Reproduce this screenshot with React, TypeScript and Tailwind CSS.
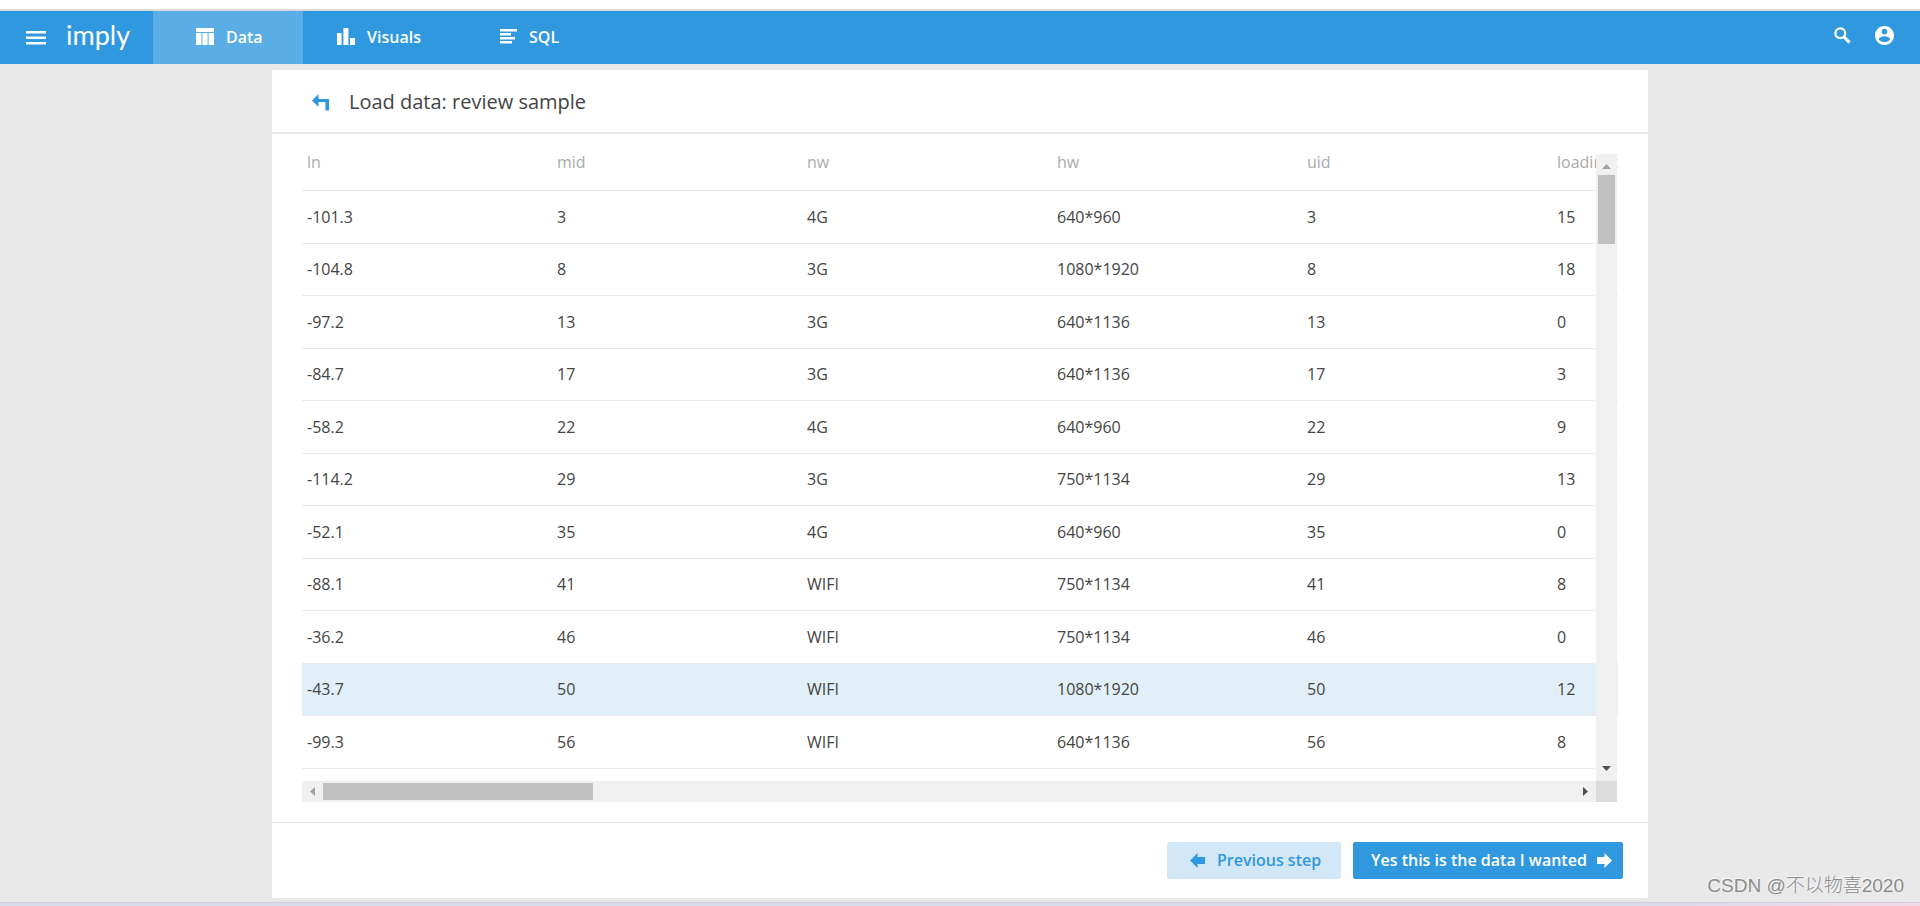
import React from 'react';

const columns = ['ln', 'mid', 'nw', 'hw', 'uid', 'loadingtime'];

const rows = [
  ['-101.3', '3', '4G', '640*960', '3', '15'],
  ['-104.8', '8', '3G', '1080*1920', '8', '18'],
  ['-97.2', '13', '3G', '640*1136', '13', '0'],
  ['-84.7', '17', '3G', '640*1136', '17', '3'],
  ['-58.2', '22', '4G', '640*960', '22', '9'],
  ['-114.2', '29', '3G', '750*1134', '29', '13'],
  ['-52.1', '35', '4G', '640*960', '35', '0'],
  ['-88.1', '41', 'WIFI', '750*1134', '41', '8'],
  ['-36.2', '46', 'WIFI', '750*1134', '46', '0'],
  ['-43.7', '50', 'WIFI', '1080*1920', '50', '12'],
  ['-99.3', '56', 'WIFI', '640*1136', '56', '8'],
];

const TopBar = () => (
  <header className="flex h-[53px] items-stretch bg-[#3098df] text-white">
    <div className="flex w-[153px] items-center gap-5 pl-[26px]">
      <button type="button" aria-label="Menu">
        <svg width="20" height="14" viewBox="0 0 20 14" fill="currentColor">
          <path d="M0 0h20v2.6H0zM0 5.5h20v2.6H0zM0 11h20v2.6H0z" />
        </svg>
      </button>
      <a href="#home" className="pb-1.5 font-['Lato'] text-[27px] leading-8">imply</a>
    </div>
    <nav className="flex font-semibold">
      <a href="#data" className="flex w-[150px] items-center gap-3 bg-[#5aade5] pb-0.5 pl-[43px]">
        <svg width="18" height="17" viewBox="0 0 18 17" fill="currentColor">
          <path d="M0 0h18v4H0zM0 5h5.4v12H0zM6.4 5h5.2v12H6.4zM12.6 5H18v12h-5.4z" />
        </svg>
        Data
      </a>
      <a href="#visuals" className="flex w-[154px] items-center gap-3 pb-0.5 pl-[34px]">
        <svg width="18" height="17" viewBox="0 0 18 17" fill="currentColor">
          <path d="M0 5h4.6v12H0zM6.4 0h5v17h-5zM13 10h5v7h-5z" />
        </svg>
        Visuals
      </a>
      <a href="#sql" className="flex w-[150px] items-center gap-3 pb-0.5 pl-[43px]">
        <svg width="17" height="15" viewBox="0 0 17 15" fill="currentColor">
          <path d="M0 0h17v2.4H0zM0 4h11v2.4H0zM0 8h15v2.4H0zM0 12h12v2.4H0z" />
        </svg>
        SQL
      </a>
    </nav>
    <div className="ml-auto flex items-center gap-6 pr-[26px] pb-1">
      <button type="button" aria-label="Search">
        <svg width="17" height="17" viewBox="0 0 17 17" fill="none" stroke="currentColor">
          <circle cx="6.3" cy="6.3" r="4.9" strokeWidth="2.3" />
          <path d="m10 10 5.6 5.6" strokeWidth="3" />
        </svg>
      </button>
      <button type="button" aria-label="Account">
        <svg width="19" height="19" viewBox="2 2 20 20" fill="currentColor">
          <path d="M12 2C6.48 2 2 6.48 2 12s4.48 10 10 10 10-4.48 10-10S17.52 2 12 2zm0 3c1.66 0 3 1.34 3 3s-1.34 3-3 3-3-1.34-3-3 1.34-3 3-3zm0 14.2c-2.5 0-4.71-1.28-6-3.22.03-1.99 4-3.08 6-3.08 1.99 0 5.97 1.09 6 3.08-1.29 1.94-3.5 3.22-6 3.22z" />
        </svg>
      </button>
    </div>
  </header>
);

const SampleTable = () => (
  <div className="relative overflow-hidden pb-3">
    <table className="w-[1500px] table-fixed border-collapse text-left">
      <thead>
        <tr className="h-14 border-b border-[#e9e9e9]">
          {columns.map((name) => (
            <th key={name} className="px-[5px] font-normal text-[#aaaaaa]">{name}</th>
          ))}
        </tr>
      </thead>
      <tbody>
        {rows.map((row) => (
          <tr
            key={row[0]}
            className={
              row[0] === '-43.7'
                ? 'h-[52px] border-b border-[#e9e9e9] bg-[#e1eff8]'
                : 'border-b border-[#e9e9e9] odd:h-[53px] even:h-[52px]'
            }
          >
            {row.map((cell, i) => (
              <td key={columns[i]} className="px-[5px]">{cell}</td>
            ))}
          </tr>
        ))}
      </tbody>
    </table>

    {/* Vertical scrollbar lies over the last column */}
    <div className="absolute top-5 right-px bottom-0 flex w-[21px] flex-col items-center bg-[#f0f0f0]">
      <svg className="mt-2.5 mb-1.5 h-[5px] w-[9px] shrink-0" viewBox="0 0 9 5" fill="#a3a3a3">
        <path d="M4.5 0 9 5H0z" />
      </svg>
      <div className="h-[69px] w-[17px] bg-[#c1c1c1]" />
      <svg className="mt-auto mb-2.5 h-[5px] w-[9px] shrink-0" viewBox="0 0 9 5" fill="#505050">
        <path d="M4.5 5 0 0h9z" />
      </svg>
    </div>
  </div>
);

const HorizontalScrollbar = () => (
  <div className="mr-px flex h-[21px] items-center bg-[#f0f0f0]">
    <svg className="mx-2 h-[9px] w-[5px]" viewBox="0 0 5 9" fill="#a3a3a3">
      <path d="M0 4.5 5 0v9z" />
    </svg>
    <div className="h-[17px] w-[270px] bg-[#c1c1c1]" />
    <svg className="mr-2 ml-auto h-[9px] w-[5px]" viewBox="0 0 5 9" fill="#505050">
      <path d="M5 4.5 0 9V0z" />
    </svg>
    <div className="h-[21px] w-[21px] bg-[#dcdcdc]" />
  </div>
);

export default function App() {
  return (
    <div className="relative min-h-screen bg-[#e9e9e9] font-['Open_Sans',sans-serif] text-base text-[#444444]">
      <div className="h-[11px] border-b-2 border-[#d9dcde] bg-white" />
      <TopBar />

      <main className="mx-auto mt-1.5 mb-1 max-w-[1376px] rounded-xs bg-white">
        <div className="flex h-16 items-center gap-5 border-b-2 border-[#e9e9e9] pt-0.5 pl-10">
          <button type="button" aria-label="Back" className="text-[#3098df]">
            <svg width="17" height="17" viewBox="0 0 17 17" fill="currentColor">
              <path d="M0 6.5 6.5 0v5H17v11.5h-3.6V8H6.5v5z" />
            </svg>
          </button>
          <h1 className="text-xl">Load data: review sample</h1>
        </div>

        <div className="px-[30px] pb-5">
          <SampleTable />
          <HorizontalScrollbar />
        </div>

        <div className="flex h-[76px] items-center justify-end gap-3 border-t border-[#e9e9e9] pr-[25px] font-semibold">
          <button type="button" className="flex h-[37px] w-[174px] items-center gap-3 rounded-xs bg-[#d2e7f8] pl-[23px] text-[#3098df]">
            <svg width="15" height="15" viewBox="0 0 15 15" fill="currentColor">
              <path d="M0 7.5 7.5 0v4H15v7H7.5v4z" />
            </svg>
            Previous step
          </button>
          <button type="button" className="flex h-[37px] w-[270px] items-center justify-between rounded-xs bg-[#3098df] pr-[11px] pl-[18px] text-white">
            Yes this is the data I wanted
            <svg width="15" height="15" viewBox="0 0 15 15" fill="currentColor">
              <path d="M15 7.5 7.5 15v-4H0V4h7.5V0z" />
            </svg>
          </button>
        </div>
      </main>

      <div className="h-1 border-t border-[#cccedc] bg-linear-to-r from-[#d9dcea] from-85% to-[#f2d9e6]" />
      <div className="absolute right-4 bottom-2 font-['Liberation_Sans','Noto_Sans_CJK_SC',sans-serif] text-[19px] leading-6 font-light text-[#8c8c8c] [text-shadow:-1px_-1px_0_#f8f8f8]">
        CSDN @不以物喜2020
      </div>
    </div>
  );
}
